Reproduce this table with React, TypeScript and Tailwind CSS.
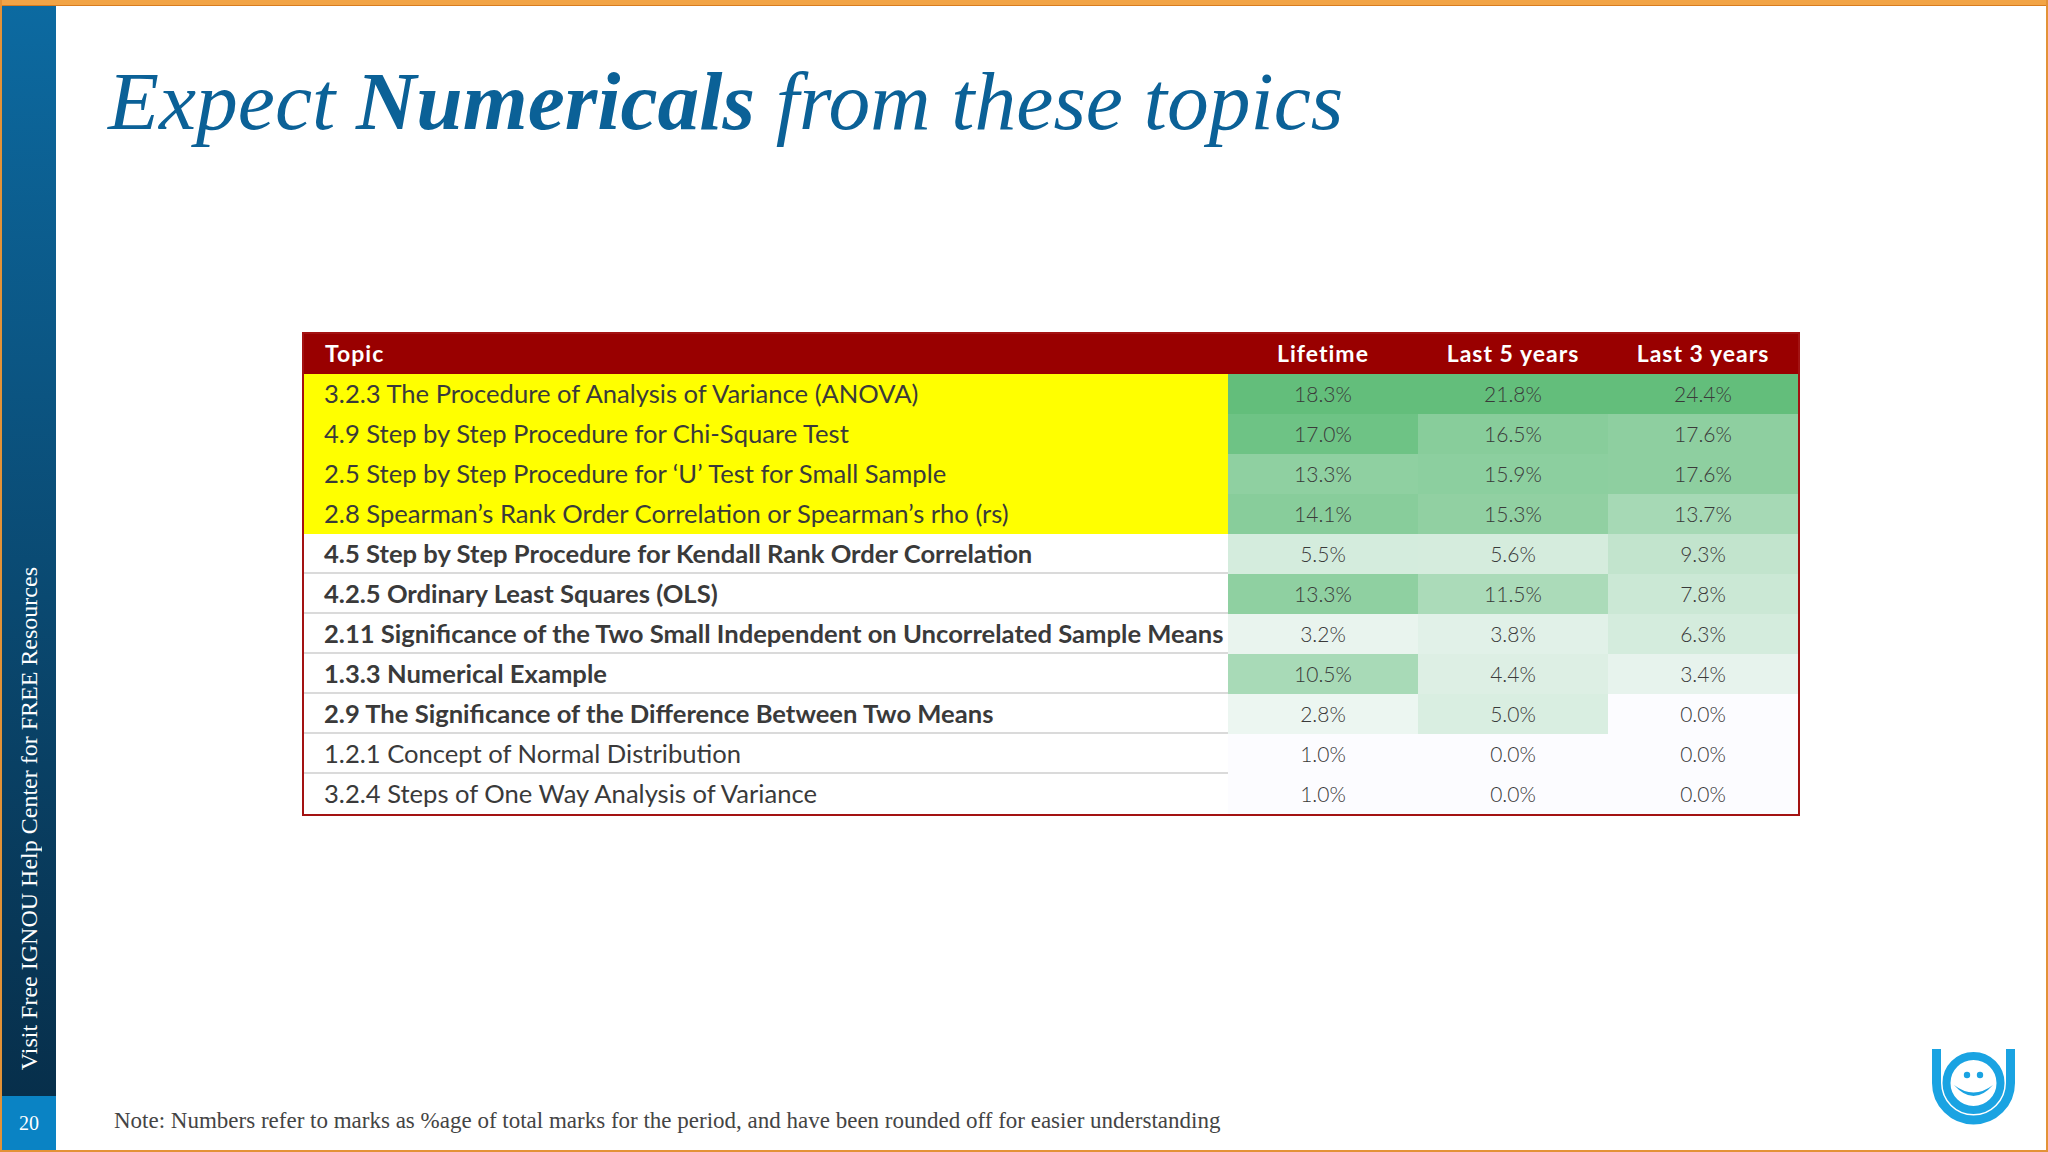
type Row = { topic: string; mark?: boolean; bold?: boolean; values: number[] };

const rows: Row[] = [
  { topic: "3.2.3 The Procedure of Analysis of Variance (ANOVA)", mark: true, values: [18.3, 21.8, 24.4] },
  { topic: "4.9 Step by Step Procedure for Chi-Square Test", mark: true, values: [17.0, 16.5, 17.6] },
  { topic: "2.5 Step by Step Procedure for \u2018U\u2019 Test for Small Sample", mark: true, values: [13.3, 15.9, 17.6] },
  { topic: "2.8 Spearman\u2019s Rank Order Correlation or Spearman\u2019s rho (rs)", mark: true, values: [14.1, 15.3, 13.7] },
  { topic: "4.5 Step by Step Procedure for Kendall Rank Order Correlation", bold: true, values: [5.5, 5.6, 9.3] },
  { topic: "4.2.5 Ordinary Least Squares (OLS)", bold: true, values: [13.3, 11.5, 7.8] },
  { topic: "2.11 Significance of the Two Small Independent on Uncorrelated Sample Means", bold: true, values: [3.2, 3.8, 6.3] },
  { topic: "1.3.3 Numerical Example", bold: true, values: [10.5, 4.4, 3.4] },
  { topic: "2.9 The Significance of the Difference Between Two Means", bold: true, values: [2.8, 5.0, 0.0] },
  { topic: "1.2.1 Concept of Normal Distribution", values: [1.0, 0.0, 0.0] },
  { topic: "3.2.4 Steps of One Way Analysis of Variance", values: [1.0, 0.0, 0.0] },
];

const columns = [
  { name: "Lifetime", min: 1.0, max: 18.3 },
  { name: "Last 5 years", min: 0, max: 21.8 },
  { name: "Last 3 years", min: 0, max: 24.4 },
];

// excel style white -> green colour scale, per column
function heat(v: number, min: number, max: number) {
  const t = (v - min) / (max - min);
  const r = Math.round(252 + (99 - 252) * t);
  const g = Math.round(252 + (190 - 252) * t);
  const b = Math.round(255 + (123 - 255) * t);
  return `rgb(${r}, ${g}, ${b})`;
}

function Logo() {
  return (
    <svg width="95" height="85" viewBox="0 0 95 85" fill="none">
      <path d="M11.5 4 V38 A37 37 0 0 0 85.5 38 V4" stroke="#1aa3e2" strokeWidth="9" />
      <circle cx="48.5" cy="38" r="27" stroke="#1aa3e2" strokeWidth="8" />
      <circle cx="42" cy="30" r="3.2" fill="#1aa3e2" />
      <circle cx="55" cy="30" r="3.2" fill="#1aa3e2" />
      <path d="M29 40 Q48.5 62 68 40 Q48.5 55 29 40 Z" fill="#1aa3e2" />
    </svg>
  );
}

export default function App() {
  return (
    <div className="w-[2048px] h-[1152px] flex flex-col bg-white border-x-2 border-b-2 border-[#e39237] overflow-hidden">
      <div className="h-[6px] bg-[#f2a446] border-b border-[#d87c1f]" />
      <div className="flex flex-1 min-h-0">
        <aside className="w-[54px] flex flex-col">
          <div className="flex-1 bg-linear-to-b from-[#0c6aa1] to-[#072f4b] flex flex-col justify-end items-center pb-[26px]">
            <span className="[writing-mode:vertical-rl] rotate-180 text-white text-[24px] leading-none font-['Liberation_Serif',serif] whitespace-nowrap">
              Visit Free IGNOU Help Center for FREE Resources
            </span>
          </div>
          <div className="h-[54px] bg-[#0a83c4] flex items-center justify-center text-white text-[20px] font-['Liberation_Serif',serif]">
            20
          </div>
        </aside>

        <main className="flex-1 flex flex-col">
          <h1 className="pt-[54px] pl-[52px] text-[83.5px] leading-none italic text-[#0b6197] font-['Liberation_Serif',serif] whitespace-nowrap">
            Expect <span className="font-bold">Numericals</span> from these topics
          </h1>

          <div className="mt-[188px] mx-auto w-[1498px] border-2 border-[#a31212] font-[Lato,sans-serif]">
            <div className="grid grid-cols-[924px_190px_190px_190px] h-[40px] bg-[#990000] text-white text-[23px] font-bold tracking-[1px]">
              <div className="pl-[21px] flex items-center">Topic</div>
              {columns.map((c) => (
                <div key={c.name} className="flex items-center justify-center">
                  {c.name}
                </div>
              ))}
            </div>
            {rows.map((row, i) => (
              <div key={row.topic} className="grid grid-cols-[924px_190px_190px_190px] h-[40px]">
                <div
                  className={
                    row.mark
                      ? "bg-[#ffff00] pl-[20px] flex items-center text-[25.6px] text-[#3a3a3a] whitespace-nowrap"
                      : i < rows.length - 1
                        ? "bg-white pl-[20px] flex items-center text-[25.6px] text-[#3a3a3a] whitespace-nowrap border-b-[3px] border-[#dadada]"
                        : "bg-white pl-[20px] flex items-center text-[25.6px] text-[#3a3a3a] whitespace-nowrap"
                  }
                >
                  <span className={row.bold ? "font-bold" : "font-normal"}>{row.topic}</span>
                </div>
                {row.values.map((v, j) => (
                  <div
                    key={j}
                    className="flex items-center justify-center text-[21px] font-light text-[#3a3a3a]"
                    style={{ backgroundColor: heat(v, columns[j].min, columns[j].max) }}
                  >
                    {v.toFixed(1)}%
                  </div>
                ))}
              </div>
            ))}
          </div>

          <footer className="mt-auto flex items-end justify-between pl-[58px] pr-[26px] pb-[20px]">
            <p className="mb-[-3px] text-[23px] leading-[24px] text-[#444] font-['Liberation_Serif',serif] whitespace-nowrap">
              Note: Numbers refer to marks as %age of total marks for the period, and have been rounded off for easier understanding
            </p>
            <Logo />
          </footer>
        </main>
      </div>
    </div>
  );
}
